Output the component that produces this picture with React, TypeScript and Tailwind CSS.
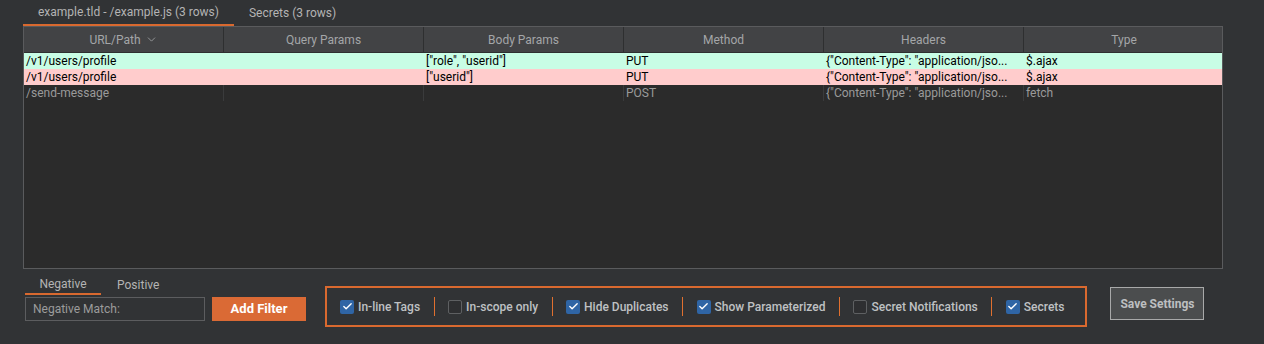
import { Check, ChevronDown } from "lucide-react";

const COLUMNS = ["URL/Path", "Query Params", "Body Params", "Method", "Headers", "Type"];

const ROWS = [
  {
    id: "r1",
    tone: "bg-[#c8fde5] text-black",
    cells: ["/v1/users/profile", "", '["role", "userid"]', "PUT", '{"Content-Type": "application/jso...', "$.ajax"],
  },
  {
    id: "r2",
    tone: "bg-[#ffcccc] text-black",
    cells: ["/v1/users/profile", "", '["userid"]', "PUT", '{"Content-Type": "application/jso...', "$.ajax"],
  },
  {
    id: "r3",
    tone: "bg-[#2b2b2b] text-[#9a9a9a]",
    cells: ["/send-message", "", "", "POST", '{"Content-Type": "application/jso...', "fetch"],
  },
];

const OPTIONS = [
  { id: "inline", label: "In-line Tags", checked: true },
  { id: "scope", label: "In-scope only", checked: false },
  { id: "dupes", label: "Hide Duplicates", checked: true },
  { id: "param", label: "Show Parameterized", checked: true },
  { id: "notif", label: "Secret Notifications", checked: false },
  { id: "secrets", label: "Secrets", checked: true },
];

function Box({ checked }: { checked: boolean }) {
  if (checked) {
    return (
      <span className="flex h-[14px] w-[14px] items-center justify-center rounded-[2px] bg-[#2f65a5]">
        <Check size={11} strokeWidth={3} className="text-white" />
      </span>
    );
  }
  return <span className="h-[14px] w-[14px] rounded-[2px] border border-[#5e6062] bg-[#2e2f31]" />;
}

export default function App() {
  return (
    <div className="flex h-[344px] w-full flex-col bg-[#313335] pl-[23px] font-['Roboto',sans-serif] text-[12px]">
      {/* result tabs */}
      <div className="flex h-[26px] items-end">
        <div className="flex h-full items-center border-b-2 border-[#d9692f] px-[15px] text-[#b4b4b4]">
          example.tld - /example.js (3 rows)
        </div>
        <div className="flex h-full items-center px-[15px] text-[#b4b4b4]">Secrets (3 rows)</div>
      </div>

      {/* table */}
      <div className="flex h-[243px] w-[1200px] flex-col border border-[#5a5b5d] bg-[#2b2b2b]">
        <div className="grid h-[26px] grid-cols-[repeat(6,200px)] border-b border-[#2e2f30] bg-[#424345]">
          {COLUMNS.map(function renderHead(col, i) {
            return (
              <div
                key={col}
                className={`flex items-center justify-center gap-[4px] text-[#a4a6a8] ${i < 5 ? "border-r border-[#2e2f30]" : ""}`}
              >
                {col}
                {i === 0 && <ChevronDown size={13} strokeWidth={1.5} />}
              </div>
            );
          })}
        </div>
        {ROWS.map(function renderRow(row) {
          return (
            <div key={row.id} className={`grid h-[16px] grid-cols-[repeat(6,200px)] leading-[16px] ${row.tone}`}>
              {row.cells.map(function renderCell(cell, i) {
                return (
                  <div
                    key={i}
                    className={`overflow-hidden whitespace-nowrap pl-[2px] ${i < 5 && row.id === "r3" ? "border-r border-[#3a3b3c]" : ""}`}
                  >
                    {cell}
                  </div>
                );
              })}
            </div>
          );
        })}
      </div>

      {/* bottom controls */}
      <div className="mt-[5px] flex items-start">
        <div className="flex w-[283px] flex-col pl-[2px]">
          <div className="flex h-[21px] items-end">
            <div className="flex h-full w-[76px] items-center justify-center border-b-2 border-[#d9692f] text-[#b4b4b4]">
              Negative
            </div>
            <div className="flex h-full items-center px-[16px] text-[#b4b4b4]">Positive</div>
          </div>
          <div className="mt-[2px] flex items-center gap-[7px]">
            <div className="flex h-[24px] w-[180px] items-center border border-[#5c5d5f] pl-[7px] text-[#9c9c9c]">
              Negative Match:
            </div>
            <button className="flex h-[24px] w-[94px] items-center justify-center bg-[#da6a35] text-[13px] font-bold text-white">
              Add Filter
            </button>
          </div>
        </div>

        <div className="mt-[12px] ml-[19px] flex h-[41px] items-center border-2 border-[#d9692f] pl-[13px] pr-[21px]">
          {OPTIONS.map(function renderOption(opt, i) {
            return (
              <div key={opt.id} className="flex items-center">
                {i > 0 && <span className="mx-[13.5px] h-[19px] w-px bg-[#e0702f]" />}
                <Box checked={opt.checked} />
                <span className="ml-[4px] font-medium text-[#bfc1c3]">{opt.label}</span>
              </div>
            );
          })}
        </div>

        <button className="mt-[13px] ml-[23px] flex h-[33px] w-[94px] items-center justify-center border border-[#a8a9a9] bg-[#4b4d4e] font-bold text-[#bdbfc0]">
          Save Settings
        </button>
      </div>
    </div>
  );
}
